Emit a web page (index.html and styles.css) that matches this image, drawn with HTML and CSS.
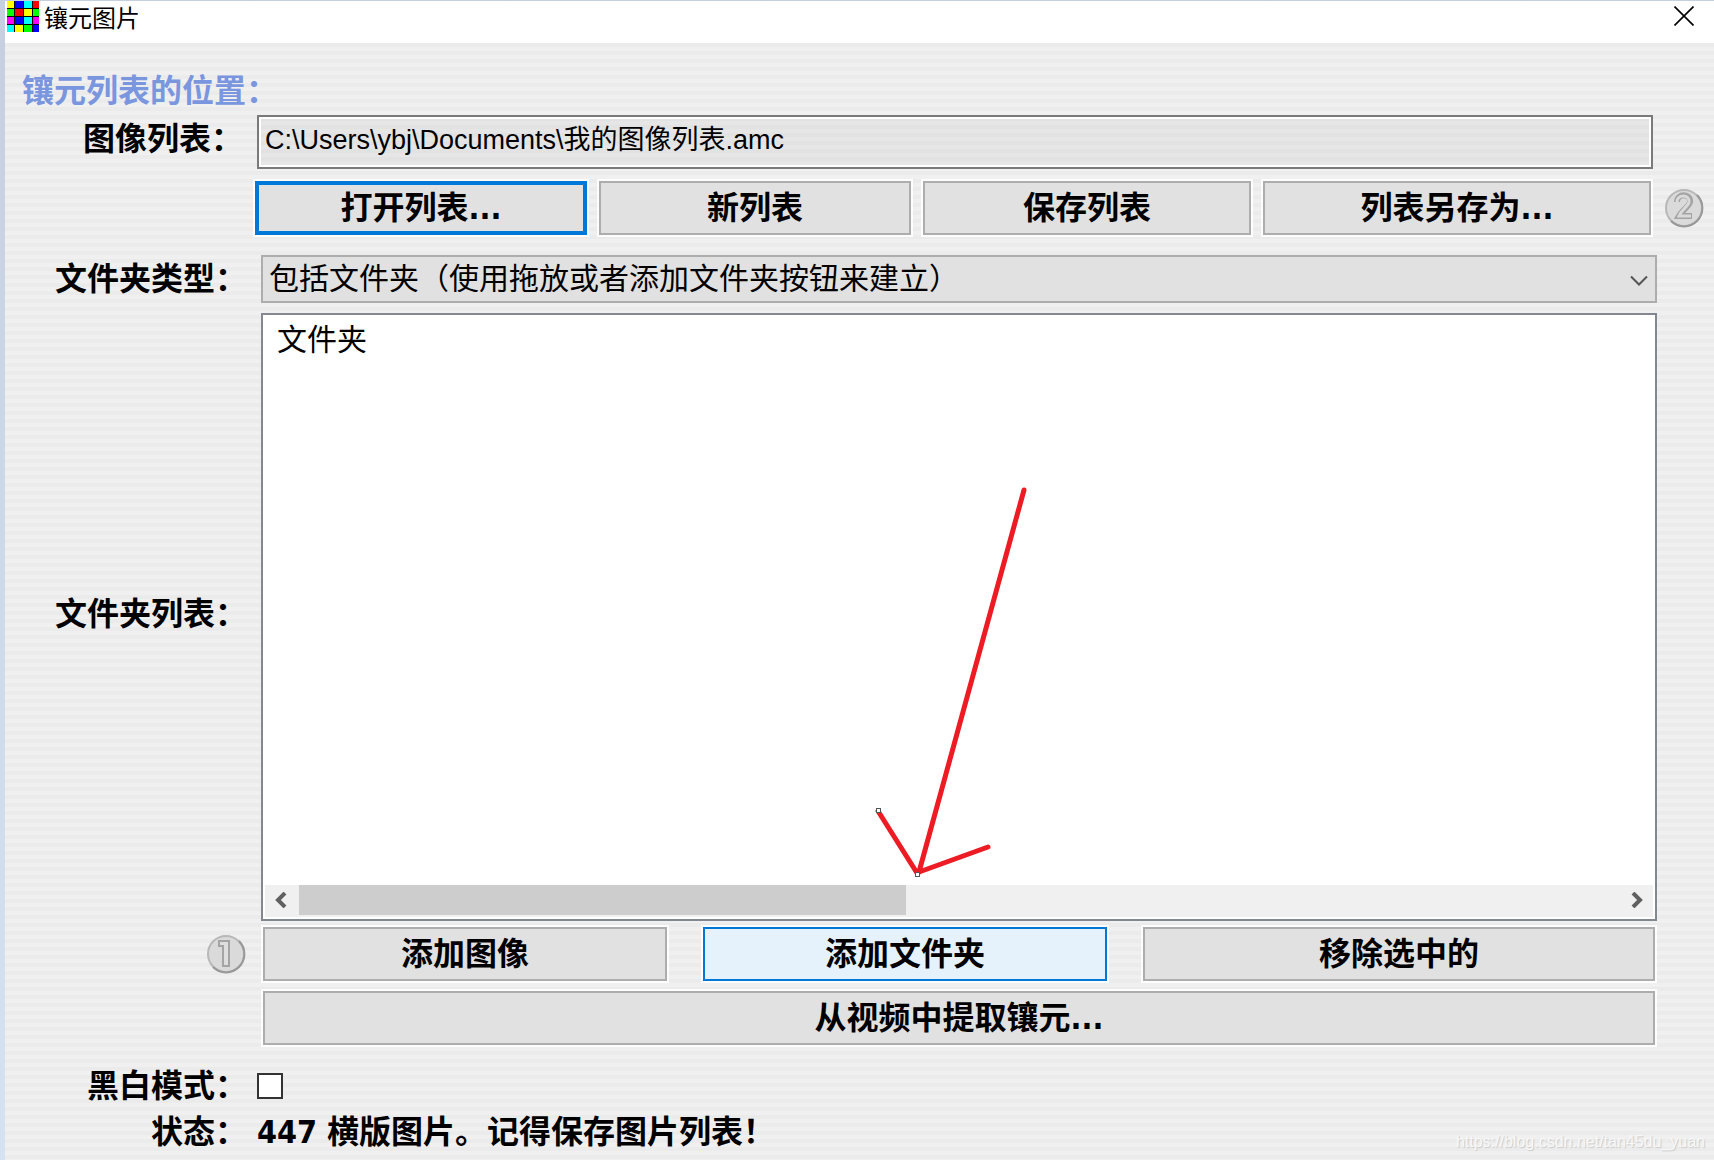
FILE: index.html
```html
<!DOCTYPE html>
<html lang="zh-CN">

<head>
    <meta charset="UTF-8">
    <title>镶元图片</title>
    <link rel="stylesheet" href="styles.css">
</head>

<body>
    <div class="window">
        <header class="titlebar">
            <svg class="app-icon" width="32" height="31" viewBox="0 0 32 31" shape-rendering="crispEdges">
                <rect width="32" height="31" fill="#000"/>
                <rect x="0" y="0" width="7" height="7" fill="#ff0"/>
                <rect x="8" y="0" width="8" height="7" fill="#00f"/>
                <rect x="17" y="0" width="8" height="7" fill="#0ff"/>
                <rect x="26" y="0" width="6" height="7" fill="#f00"/>
                <rect x="0" y="8" width="7" height="7" fill="#0f0"/>
                <rect x="8" y="8" width="8" height="7" fill="#f00"/>
                <rect x="17" y="8" width="8" height="7" fill="#ff0"/>
                <rect x="26" y="8" width="6" height="7" fill="#0f0"/>
                <rect x="0" y="16" width="7" height="7" fill="#f0f"/>
                <rect x="8" y="16" width="8" height="7" fill="#00f"/>
                <rect x="17" y="16" width="8" height="7" fill="#0ff"/>
                <rect x="26" y="16" width="6" height="7" fill="#f0f"/>
                <rect x="0" y="24" width="7" height="7" fill="#0ff"/>
                <rect x="8" y="24" width="8" height="7" fill="#ff0"/>
                <rect x="17" y="24" width="8" height="7" fill="#0f0"/>
                <rect x="26" y="24" width="6" height="7" fill="#00f"/>
            </svg>
            <h1>镶元图片</h1>
            <button type="button" class="close" aria-label="关闭">
                <svg width="20" height="20" viewBox="0 0 20 20">
                    <path d="M0.5 0.5L19.5 19.5M19.5 0.5L0.5 19.5" stroke="#000" stroke-width="1.6"/>
                </svg>
            </button>
        </header>

        <form class="content">
            <h2>镶元列表的位置：</h2>

            <div class="row source path-row">
                <label for="list-path">图像列表：</label>
                <input type="text" id="list-path" value="C:\Users\ybj\Documents\我的图像列表.amc" readonly>
            </div>
            <div class="row list-actions">
                <div class="buttons list-buttons">
                    <button type="button" class="btn default">打开列表...</button>
                    <button type="button" class="btn">新列表</button>
                    <button type="button" class="btn">保存列表</button>
                    <button type="button" class="btn">列表另存为...</button>
                </div>
                <svg class="step" width="40" height="40" viewBox="0 0 40 40">
                    <circle cx="20" cy="20" r="18" fill="#dadada" stroke="#b8b8b8" stroke-width="2"/>
                    <path d="M33 7A18 18 0 0 1 7 33" fill="none" stroke="#989898" stroke-width="2"/>
                    <path d="M13 14C13 5 27 5 26 14C25 19 19 21 15 28H28" fill="none" stroke="#a4a4a4" stroke-width="6"/>
                    <path d="M13 14C13 6 26 6 25 14C24 19 18 21 15 28H27" fill="none" stroke="#dadada" stroke-width="3"/>
                </svg>
            </div>

            <div class="row folders type-row">
                <label for="folder-type">文件夹类型：</label>
                <div class="select-box">
                    <select id="folder-type">
                        <option>包括文件夹（使用拖放或者添加文件夹按钮来建立）</option>
                    </select>
                    <svg class="chevron" width="18" height="12" viewBox="0 0 18 12">
                        <path d="M1 1.5L9 9.5L17 1.5" fill="none" stroke="#555" stroke-width="2"/>
                    </svg>
                </div>
            </div>

            <div class="row folders list-row">
                <span class="label" id="folders-label">文件夹列表：</span>
                <div class="folder-list">
                    <table aria-labelledby="folders-label">
                        <thead>
                            <tr><th>文件夹</th></tr>
                        </thead>
                    </table>
                    <div class="scrollbar">
                        <button type="button" class="scroll-arrow" aria-label="向左">
                            <svg width="16" height="16" viewBox="0 0 16 16">
                                <path d="M11 1L4 8L11 15" fill="none" stroke="#606060" stroke-width="4"/>
                            </svg>
                        </button>
                        <div class="track"><div class="thumb"></div></div>
                        <button type="button" class="scroll-arrow" aria-label="向右">
                            <svg width="16" height="16" viewBox="0 0 16 16">
                                <path d="M5 1L12 8L5 15" fill="none" stroke="#606060" stroke-width="4"/>
                            </svg>
                        </button>
                    </div>
                    <!-- hand-drawn pointer to the add folder button -->
                    <svg class="arrow" width="180" height="410" viewBox="0 0 180 410">
                        <path d="M161 10L56 392M15 331L54 393M125 367L56 392" fill="none" stroke="#ed1c24" stroke-width="5" stroke-linecap="round"/>
                        <rect x="13.5" y="328.5" width="4" height="4" fill="#fff" stroke="#555"/>
                        <rect x="52.5" y="392.5" width="4" height="4" fill="#fff" stroke="#555"/>
                    </svg>
                </div>
            </div>

            <div class="row folders add-row">
                <svg class="step" width="40" height="40" viewBox="0 0 40 40">
                    <circle cx="20" cy="20" r="18" fill="#dadada" stroke="#b8b8b8" stroke-width="2"/>
                    <path d="M33 7A18 18 0 0 1 7 33" fill="none" stroke="#989898" stroke-width="2"/>
                    <path d="M13 7H23V32H17V12H13Z" fill="#dedede" stroke="#a4a4a4" stroke-width="2"/>
                </svg>
                <div class="buttons add-buttons">
                    <button type="button" class="btn">添加图像</button>
                    <button type="button" class="btn hot">添加文件夹</button>
                    <button type="button" class="btn">移除选中的</button>
                </div>
            </div>
            <div class="row folders extract-row">
                <div class="buttons">
                    <button type="button" class="btn">从视频中提取镶元...</button>
                </div>
            </div>

            <div class="row source mode-row">
                <label for="bw-mode">黑白模式：</label>
                <input type="checkbox" id="bw-mode">
            </div>
            <div class="row source status-row">
                <span class="label">状态：</span>
                <span class="status">447 横版图片。记得保存图片列表！</span>
            </div>
        </form>
        <div class="watermark">https://blog.csdn.net/tan45du_yuan</div>
    </div>
</body>

</html>
```

FILE: styles.css
```css
* {
    box-sizing: border-box;
}

body {
    margin: 0;
    color: #000;
    font-family: "DejaVu Sans Condensed", "Noto Sans CJK SC", sans-serif;
    font-size: 32px;
    line-height: 32px;
}

button,
input,
select {
    font: inherit;
    color: inherit;
    margin: 0;
}

.window {
    position: relative;
    display: flex;
    flex-direction: column;
    min-height: 100vh;
    padding: 1px 0 0 5px;
    background: linear-gradient(#c5cfe0, #d6e2f2);
}

.titlebar {
    display: flex;
    align-items: flex-start;
    height: 42px;
    padding: 0 20px 0 2px;
    background-color: #fff;
}

.titlebar h1 {
    flex-grow: 1;
    margin: 0 0 0 5px;
    font-family: "Noto Sans CJK SC", sans-serif;
    font-size: 24px;
    font-weight: 400;
}

.close {
    padding: 5px 0 0;
    border: none;
    background: none;
    line-height: 0;
    cursor: pointer;
}

.content {
    flex: 1;
    display: flex;
    flex-direction: column;
    padding: 32px 0 12px;
    font-weight: 700;
    background: repeating-linear-gradient(#ebebeb 0 4px, #f0f0f0 4px 8px);
}

h2 {
    margin: 0 0 8px 17px;
    color: #7a96df;
    font-size: 32px;
}

.row {
    display: grid;
    align-items: center;
}

.source {
    grid-template-columns: 242px 1fr;
    column-gap: 10px;
    padding-right: 61px;
}

.folders {
    grid-template-columns: 242px 1fr;
    column-gap: 14px;
    padding-right: 57px;
}

label,
.label {
    text-align: right;
    white-space: nowrap;
}

.path-row label {
    padding: 0 4px 6px 0;
}

#list-path {
    width: 100%;
    height: 54px;
    padding: 0 6px 10px;
    border: 2px solid #7a7a7a;
    outline: 2px solid #fff;
    outline-offset: -4px;
    background: repeating-linear-gradient(#e2e2e2 0 4px, #e6e6e6 4px 8px);
    font-family: "Liberation Sans", "Noto Sans CJK SC", sans-serif;
    font-size: 27px;
    font-weight: 400;
}

.list-actions {
    grid-template-columns: 1fr 61px;
    margin-top: 10px;
    padding-left: 248px;
}

.list-actions .step {
    justify-self: center;
}

.buttons {
    display: grid;
    padding: 2px;
}

.list-buttons {
    grid-template-columns: 332fr 312fr 328fr 388fr;
    column-gap: 12px;
}

.add-buttons {
    grid-template-columns: 404fr 404fr 512fr;
    column-gap: 36px;
}

.btn {
    height: 54px;
    padding: 0;
    border: 2px solid #adadad;
    box-shadow: 0 0 0 2px #fdfdfd;
    background-color: #e1e1e1;
    font-weight: 700;
    white-space: nowrap;
    cursor: pointer;
}

.btn.default {
    border: 4px solid #0078d7;
}

.btn.hot {
    border-color: #0078d7;
    background-color: #e5f1fb;
}

.type-row {
    margin-top: 18px;
}

.select-box {
    position: relative;
}

select {
    display: block;
    width: 100%;
    height: 48px;
    padding: 0 40px 6px 6px;
    appearance: none;
    border: 2px solid #adadad;
    border-radius: 0;
    background-color: #e1e1e1;
    font-family: "Noto Sans CJK SC", sans-serif;
    font-size: 30px;
    font-weight: 400;
}

.chevron {
    position: absolute;
    right: 9px;
    top: 20px;
    pointer-events: none;
}

.list-row {
    flex: 1;
    margin-top: 10px;
}

.list-row .label {
    padding-bottom: 6px;
}

.folder-list {
    position: relative;
    display: flex;
    flex-direction: column;
    justify-content: space-between;
    align-self: stretch;
    min-height: 480px;
    padding: 6px 2px 2px;
    border: 2px solid #828790;
    background-color: #fff;
}

.folder-list th {
    padding: 0 12px;
    font-family: "Noto Sans CJK SC", sans-serif;
    font-size: 30px;
    font-weight: 400;
}

.folder-list table {
    align-self: flex-start;
    border-collapse: collapse;
}

.scrollbar {
    display: flex;
    height: 32px;
    background-color: #f0f0f0;
}

.scroll-arrow {
    width: 34px;
    padding: 0 0 2px;
    border: none;
    background: none;
    line-height: 0;
}

.track {
    flex: 1;
}

.thumb {
    width: 46%;
    height: 30px;
    background-color: #cdcdcd;
}

.arrow {
    position: absolute;
    left: 600px;
    top: 165px;
}

.add-row {
    margin-top: 4px;
}

.add-row .step {
    justify-self: end;
    margin-right: 1px;
}

.extract-row {
    margin-top: 6px;
}

.extract-row .buttons {
    grid-column: 2;
}

.mode-row {
    margin-top: 23px;
}

#bw-mode {
    width: 26px;
    height: 26px;
    appearance: none;
    border: 2px solid #333;
    background-color: #fff;
}

.status-row {
    margin-top: 14px;
}

.watermark {
    position: absolute;
    right: 9px;
    bottom: 2px;
    color: #f8f8f8;
    font-family: "Liberation Sans", Arial, sans-serif;
    font-size: 16px;
    text-shadow: 1px 1px 1px #c8c8c8;
}
```
